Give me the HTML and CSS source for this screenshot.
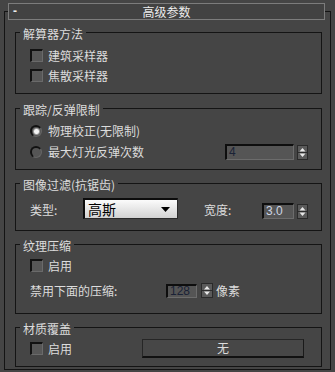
FILE: index.html
```html
<!DOCTYPE html>
<html>
<head>
<meta charset="utf-8">
<link rel="stylesheet" href="styles.css">
</head>
<body>
<div class="panel">
  <div class="header"><span class="minus">-</span><span class="htitle">高级参数</span><span></span></div>
  <div class="frame">
    <div class="group g1">
      <div class="gtitle">解算器方法</div>
      <div class="row cbrow first"><span class="cb"></span><span class="lbl">建筑采样器</span></div>
      <div class="row cbrow second"><span class="cb"></span><span class="lbl">焦散采样器</span></div>
    </div>

    <div class="group g2">
      <div class="gtitle">跟踪/反弹限制</div>
      <div class="row radrow"><span class="radio on"></span><span class="lbl">物理校正(无限制)</span></div>
      <div class="row spinrow">
        <span class="radio"></span><span class="lbl">最大灯光反弹次数</span>
        <span class="spin push">
          <span class="spin-input wide dark">4</span>
          <span class="spin-arrows"><svg width="9" height="13" viewBox="0 0 9 13"><path d="M4.5 2 L7.5 5.5 L1.5 5.5 Z" fill="#e8e8e8"/><path d="M0 6.5 H9" stroke="#2c2c2c" stroke-width="1"/><path d="M1.5 7.5 L7.5 7.5 L4.5 11 Z" fill="#e8e8e8"/></svg></span>
        </span>
      </div>
    </div>

    <div class="group g3">
      <div class="gtitle">图像过滤(抗锯齿)</div>
      <div class="row filtrow">
        <span class="lbl typelbl">类型:</span>
        <span class="dd"><span class="ddtext">高斯</span><svg width="9" height="5" viewBox="0 0 9 5"><path d="M0 0 H9 L4.5 5 Z" fill="#000"/></svg></span>
        <span class="lbl widthlbl">宽度:</span>
        <span class="spin push">
          <span class="spin-input narrow light">3.0</span>
          <span class="spin-arrows"><svg width="9" height="13" viewBox="0 0 9 13"><path d="M4.5 2 L7.5 5.5 L1.5 5.5 Z" fill="#e8e8e8"/><path d="M0 6.5 H9" stroke="#2c2c2c" stroke-width="1"/><path d="M1.5 7.5 L7.5 7.5 L4.5 11 Z" fill="#e8e8e8"/></svg></span>
        </span>
      </div>
    </div>

    <div class="group g4">
      <div class="gtitle">纹理压缩</div>
      <div class="row cbrow third"><span class="cb"></span><span class="lbl">启用</span></div>
      <div class="row comprow">
        <span class="lbl complbl">禁用下面的压缩:</span>
        <span class="spin spin4">
          <span class="spin-input small dark">128</span>
          <span class="spin-arrows"><svg width="10" height="13" viewBox="0 0 10 13"><path d="M5 2 L8 5.5 L2 5.5 Z" fill="#e8e8e8"/><path d="M0 6.5 H10" stroke="#2c2c2c" stroke-width="1"/><path d="M2 7.5 L8 7.5 L5 11 Z" fill="#e8e8e8"/></svg></span>
        </span>
        <span class="lbl unit">像素</span>
      </div>
    </div>

    <div class="group g5">
      <div class="gtitle">材质覆盖</div>
      <div class="row matrow">
        <span class="cb"></span><span class="lbl">启用</span>
        <span class="btn">无</span>
      </div>
    </div>
  </div>
</div>
</body>
</html>
```

FILE: styles.css
```css
html, body {
  margin: 0;
  padding: 0;
  background: #454545;
}
body {
  width: 335px;
  height: 372px;
  overflow: hidden;
  font-family: "Noto Sans CJK SC", "Noto Sans", sans-serif;
  font-size: 12px;
  color: #dcdcdc;
}
.panel {
  padding-top: 3px;
}
.header {
  position: relative;
  z-index: 1;
  box-sizing: border-box;
  width: 317px;
  height: 17px;
  margin: 0 10px 0 8px;
  border: 1px solid #7c7c7c;
  background: #424242;
  display: grid;
  grid-template-columns: 1fr auto 1fr;
  align-items: center;
  line-height: 15px;
  color: #ececec;
}
.minus {
  padding-left: 4px;
  font-family: "Liberation Sans", sans-serif;
  font-weight: bold;
  line-height: 13px;
}
.htitle {
  font-size: 12px;
}
.frame {
  margin: -9px 4px 0 4px;
  border: 1px solid #141414;
  padding: 20px 0 2px 0;
}
.group {
  border: 1px solid #141414;
  margin: 0 8px 0 10px;
  padding: 0 13px 0 14px;
}
.g2, .g3, .g4, .g5 { margin-top: 13px; }
.g2 { margin-top: 14px; }
.g1 { padding-bottom: 11px; }
.g2 { padding-bottom: 9px; }
.g3 { padding-bottom: 11px; }
.g4 { padding-bottom: 15px; }
.g5 { padding-bottom: 8px; }

.gtitle {
  width: fit-content;
  height: 14px;
  line-height: 14px;
  margin: -6px 0 0 -10px;
  padding: 0 3px;
  background: #454545;
  white-space: nowrap;
}
.row {
  display: flex;
  align-items: center;
  white-space: nowrap;
}
.lbl {
  line-height: 16px;
}
.cbrow { height: 13px; }
.cbrow.first { margin-top: 8px; }
.cbrow.second { margin-top: 7px; }
.cbrow.third { margin-top: 6px; }
.cbrow .lbl, .matrow .cb + .lbl { margin-left: 5px; }

.cb {
  flex: none;
  box-sizing: border-box;
  width: 13px;
  height: 13px;
  border-style: solid;
  border-width: 2px 1px 1px 2px;
  border-color: #121212 #6a6a6a #6a6a6a #121212;
  background: #575757;
}
.radio {
  flex: none;
  box-sizing: border-box;
  width: 12px;
  height: 12px;
  border-radius: 50%;
  border-style: solid;
  border-width: 2px 1px 1px 2px;
  border-color: #111 #666 #666 #111;
  background: #555;
}
.radio.on {
  background: radial-gradient(circle at 50% 50%, #f4f4f4 0, #f4f4f4 2px, #9a9a9a 3px, #555 4px);
}
.radrow { height: 12px; margin-top: 8px; }
.radrow .lbl, .spinrow .radio + .lbl { margin-left: 6px; }
.spinrow { height: 16px; margin-top: 7px; }

.spin {
  display: flex;
  align-items: flex-end;
  gap: 3px;
}
.push { margin-left: auto; }
.spin-input {
  box-sizing: border-box;
  height: 16px;
  border-style: solid;
  border-width: 2px 1px 1px 2px;
  border-color: #0e0e0e #6c6c6c #6c6c6c #0e0e0e;
  background: #555;
  font-family: "Liberation Sans", sans-serif;
  font-size: 12px;
  line-height: 13px;
  padding-left: 2px;
}
.spin-input.wide { width: 69px; }
.spin-input.narrow { width: 32px; }
.spin-input.small { width: 31px; height: 14px; line-height: 11px; }
.spin-input.dark { color: #1a2236; }
.spin-input.light { color: #cdd5e4; }
.spin-arrows {
  box-sizing: border-box;
  width: 11px;
  height: 15px;
  border: 1px solid #2a2a2a;
  background: #5a5a5a;
  display: flex;
  align-items: center;
  justify-content: center;
}
.spin4 { gap: 4px; align-items: center; }
.spin4 .spin-arrows { width: 12px; }

.filtrow {
  height: 21px;
  margin-top: 6px;
  align-items: flex-end;
}
.filtrow .lbl { margin-bottom: 1px; }
.typelbl { width: 53px; }
.dd {
  box-sizing: border-box;
  width: 95px;
  height: 21px;
  border-style: solid;
  border-width: 2px 1px 1px 2px;
  border-color: #0c0c0c #2a2a2a #2a2a2a #0c0c0c;
  background: linear-gradient(#fbfbfb, #d2d2d2);
  color: #000;
  display: flex;
  align-items: center;
  justify-content: space-between;
  padding: 0 7px 0 3px;
}
.ddtext { font-size: 14px; line-height: 16px; }
.widthlbl { margin-left: 26px; }

.comprow { height: 15px; margin-top: 11px; }
.complbl { width: 136px; }
.unit { margin-left: 3px; }

.matrow { height: 19px; margin-top: 3px; }
.btn {
  box-sizing: border-box;
  margin-left: auto;
  margin-right: 4px;
  width: 162px;
  height: 19px;
  border-style: solid;
  border-width: 1px 1px 2px 1px;
  border-color: #262626 #1a1a1a #111 #262626;
  background: #474747;
  text-align: center;
  line-height: 16px;
}
```
